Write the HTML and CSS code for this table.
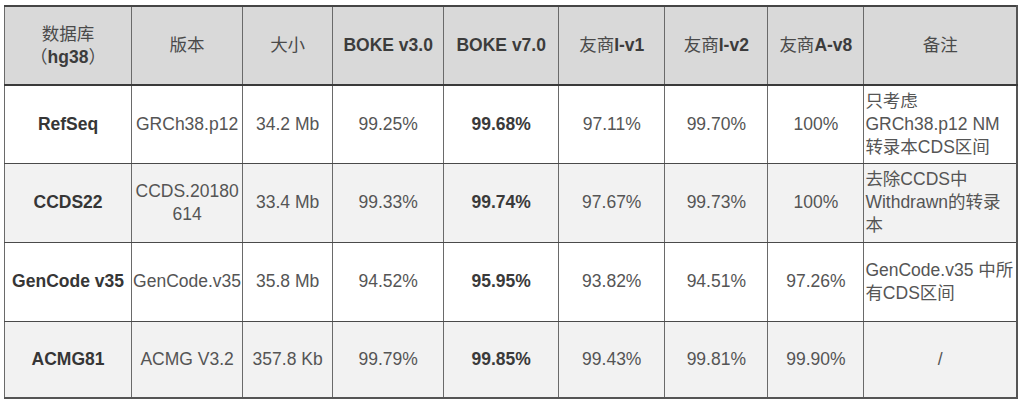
FILE: index.html
```html
<!DOCTYPE html>
<html lang="zh">
<head>
<meta charset="utf-8">
<title>数据库对比</title>
<link rel="stylesheet" href="styles.css">
</head>
<body>
<table class="cmp">
  <colgroup>
    <col class="c1"><col class="c2"><col class="c3"><col class="c4"><col class="c5"><col class="c6"><col class="c7"><col class="c8"><col class="c9">
  </colgroup>
  <thead>
    <tr class="head">
      <th><span class="cjk">数据库</span><br><span class="cjk">（</span>hg38<span class="cjk">）</span></th>
      <th><span class="cjk">版本</span></th>
      <th><span class="cjk">大小</span></th>
      <th>BOKE v3.0</th>
      <th>BOKE v7.0</th>
      <th><span class="cjk">友商</span>I-v1</th>
      <th><span class="cjk">友商</span>I-v2</th>
      <th><span class="cjk">友商</span>A-v8</th>
      <th><span class="cjk">备注</span></th>
    </tr>
  </thead>
  <tbody>
    <tr class="r1">
      <td class="name">RefSeq</td>
      <td class="tight">GRCh38.p12</td>
      <td>34.2 Mb</td>
      <td>99.25%</td>
      <td class="hl">99.68%</td>
      <td>97.11%</td>
      <td>99.70%</td>
      <td>100%</td>
      <td class="note">只考虑<br>GRCh38.p12 NM<br>转录本CDS区间</td>
    </tr>
    <tr class="r2">
      <td class="name">CCDS22</td>
      <td class="tight">CCDS.20180<br>614</td>
      <td>33.4 Mb</td>
      <td>99.33%</td>
      <td class="hl">99.74%</td>
      <td>97.67%</td>
      <td>99.73%</td>
      <td>100%</td>
      <td class="note">去除CCDS中<br>Withdrawn的转录<br>本</td>
    </tr>
    <tr class="r3">
      <td class="name">GenCode v35</td>
      <td class="tight">GenCode.v35</td>
      <td>35.8 Mb</td>
      <td>94.52%</td>
      <td class="hl">95.95%</td>
      <td>93.82%</td>
      <td>94.51%</td>
      <td>97.26%</td>
      <td class="note">GenCode.v35 中所<br>有CDS区间</td>
    </tr>
    <tr class="r4">
      <td class="name">ACMG81</td>
      <td class="tight">ACMG V3.2</td>
      <td>357.8 Kb</td>
      <td>99.79%</td>
      <td class="hl">99.85%</td>
      <td>99.43%</td>
      <td>99.81%</td>
      <td>99.90%</td>
      <td class="slash">/</td>
    </tr>
  </tbody>
</table>
</body>
</html>
```

FILE: styles.css
```css
html, body {
  margin: 0;
  padding: 0;
  background: #ffffff;
}

body {
  font-family: "Liberation Sans", "Noto Sans CJK SC", sans-serif;
  font-size: 17.5px;
  color: #555555;
}

.cmp {
  margin: 5px 0 0 4px;
  width: 1014px;
  border-collapse: collapse;
  table-layout: fixed;
  border-top: 2px solid #454545;
  border-bottom: 2px solid #555555;
  border-left: 1px solid #8a8a8a;
  border-right: 2px solid #555555;
}

.c1 { width: 127px; }
.c2 { width: 111px; }
.c3 { width: 90px; }
.c4 { width: 111px; }
.c5 { width: 115px; }
.c6 { width: 106px; }
.c7 { width: 103px; }
.c8 { width: 96px; }
.c9 { width: 153px; }

.cmp th,
.cmp td {
  text-align: center;
  vertical-align: middle;
  padding: 0 2px;
  border-left: 1px solid #6a6a6a;
  border-right: 1px solid #6a6a6a;
  line-height: 23px;
  white-space: nowrap;
}

.cmp th {
  background: #d9d9d9;
  font-weight: bold;
  color: #3c3c3c;
  border-bottom: 2px solid #3a3a3a;
}

.cjk {
  font-weight: normal;
  color: #4a4a4a;
}

.head { height: 79px; }
.r1 { height: 78px; }
.r2 { height: 79px; }
.r3 { height: 79px; }
.r4 { height: 77px; }

.r1 td, .r3 td { background: #ffffff; }
.r2 td, .r4 td { background: #f2f2f2; }

.r1 td, .r2 td, .r3 td {
  border-bottom: 1px solid #4a4a4a;
}

.cmp td.name {
  font-weight: bold;
  color: #363636;
}

.cmp td.hl {
  font-weight: bold;
  color: #3a3a3a;
}

.cmp td.tight {
  padding: 0 1px;
}

.cmp td.note {
  text-align: left;
  padding: 0 1px;
}
```
